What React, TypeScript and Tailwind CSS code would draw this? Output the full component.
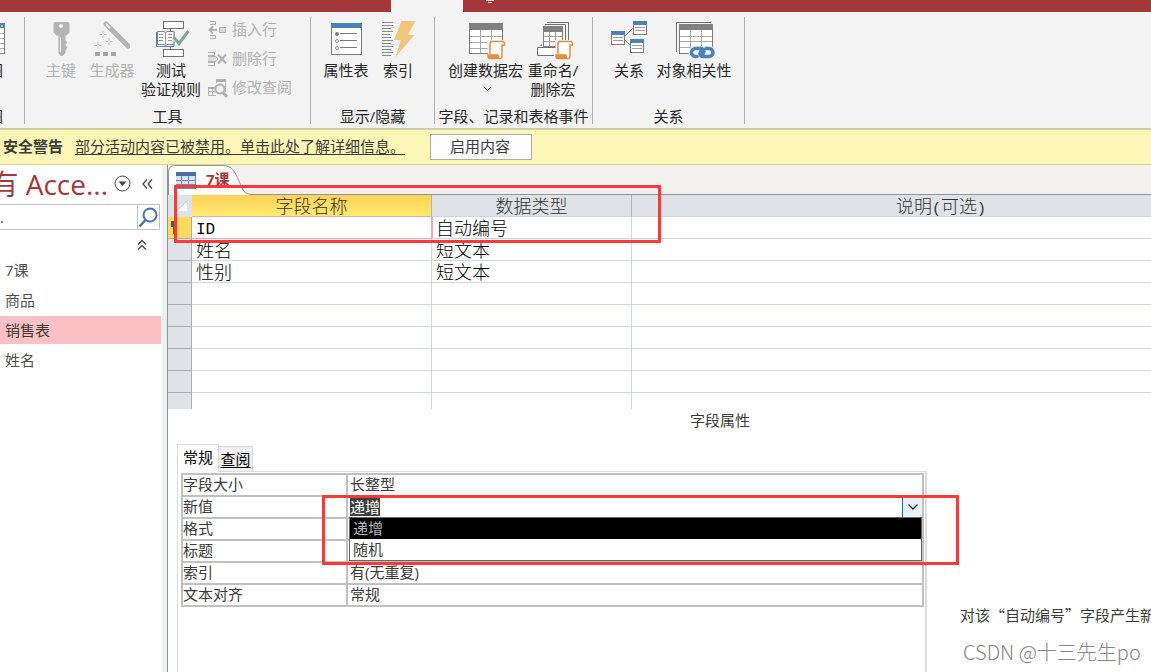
import React from "react";

const UI = "font-['Open_Sans','Noto_Sans_CJK_SC',sans-serif]";

function DatasheetIcon() {
  return (
    <svg className="-mr-0.5 h-10 w-8 shrink-0" viewBox="0 0 32 40" fill="none">
      <rect x="1.500" y="3.500" width="30" height="30" fill="#fff" stroke="#7a7a7a" />
      <rect x="2" y="4" width="29" height="4" fill="#4b82ba" />
      <path d="M28 6h2" stroke="#fff" />
      <path d="M2 13.500h29M2 18.500h29M2 23.500h29M2 28.500h29M12.500 8v25M22.500 8v25" stroke="#a9a9a9" />
    </svg>
  );
}

function KeyIcon() {
  return (
    <svg className="h-10 w-8" viewBox="0 0 32 40">
      <path
        fill="#b5b3b5"
        fillRule="evenodd"
        d="M9.500 2h13a2 2 0 0 1 2 2v8.500l-3 3h-1v5l2 2-2 2v1l2 2-2 3v2.500l-3 3h-2l-2-3V15.500h-2l-3-3V4a2 2 0 0 1 2-2Zm6.500 2a2 2 0 1 0 0 4 2 2 0 0 0 0-4Zm-1 13v15h1V17Z"
      />
    </svg>
  );
}

function BuilderIcon() {
  return (
    <svg className="h-10 w-9" viewBox="0 0 36 40" fill="none">
      <path d="M12 4 34 26" stroke="#b5b3b5" strokeWidth="5" strokeLinecap="round" />
      <path d="m12 4 4 4" stroke="#f3f3f3" strokeWidth="2" />
      <path d="M9 11v2.500M9 15.500V18M5.500 14.500H8M10 14.500h2.500M15 18v2.500M15 22.500V25M11.500 21.500H14M16 21.500h2.500M4 22v2.500M4 26.500V29M.5 25.500H3M5 25.500h2.500" stroke="#b9b7b9" />
      <path d="M1 34h5M9 34h5M17 34h5" stroke="#a5a3a5" strokeWidth="4" />
    </svg>
  );
}

function ValidationIcon() {
  return (
    <svg className="ml-1 h-10 w-9" viewBox="0 0 36 40" fill="none">
      <path d="M15.500 8v22" stroke="#707070" />
      <rect x="8.500" y="1.500" width="20" height="7" fill="#fff" stroke="#707070" />
      <rect x="8.500" y="29.500" width="20" height="7" fill="#fff" stroke="#707070" />
      <path d="M1.500 12v14.500h17.500V12" fill="#fff" stroke="#4b82ba" />
      <path d="M2.500 11.500H9l1.500 1 1.500-1h7v13h-7l-1.500 1-1.500-1H2.500Z" fill="#fff" stroke="#808080" />
      <path d="M10.500 12v13M4 14.500h4M4 17.500h4M4 20.500h4M13 14.500h4M13 17.500h4M13 20.500h4" stroke="#969696" />
      <path d="m19 17 5.500 6.500L34 11" stroke="#f3f3f3" strokeWidth="5" />
      <path d="m18.500 17 5.500 6.500L33.500 11" stroke="#75aa97" strokeWidth="3" />
    </svg>
  );
}

function InsertRowIcon() {
  return (
    <svg className="h-[20px] w-[20px]" viewBox="0 0 20 20" fill="none" stroke="#b1afb1">
      <path d="M2 1.500h5.500v3H2M2 18.500h5.500v-3H2" />
      <rect x="11.500" y="7.500" width="6" height="5" fill="#dedbe0" />
      <path d="M9 10H2M5 6.500 1.500 10 5 13.500" strokeWidth="2" />
    </svg>
  );
}

function DeleteRowIcon() {
  return (
    <svg className="h-[20px] w-[20px]" viewBox="0 0 20 20" fill="none" stroke="#b1afb1">
      <path d="M0 3.500h6.500v3H0M0 16.500h6.500v-3H0" />
      <path d="M0 7.500h8l2 2.500-2 2.500H0" fill="#dedbe0" />
      <path d="m10 5.500 8 9M18 5.500l-8 9" strokeWidth="2" />
    </svg>
  );
}

function ModifyLookupIcon() {
  return (
    <svg className="h-[20px] w-[20px]" viewBox="0 0 20 20" fill="none" stroke="#b1afb1">
      <path d="M8.500 5V1.500h9V14" />
      <path d="M8 2.500h10" strokeWidth="3" />
      <path d="M7 9.500H.500v8H8M1 13.500h6M4.500 10v8" />
      <path d="M0 10h7" strokeWidth="2" />
      <circle cx="12" cy="11" r="4.500" fill="#f3f3f3" strokeWidth="2" />
      <path d="m15 14.500 4 4.500" strokeWidth="3" />
    </svg>
  );
}

function PropertySheetIcon() {
  return (
    <svg className="h-10 w-8" viewBox="0 0 32 40" fill="none">
      <rect x="1.500" y="3.500" width="30" height="31" fill="#fff" stroke="#7a7a7a" />
      <rect x="1" y="3" width="31" height="5" fill="#4b82ba" />
      <circle cx="7" cy="14" r="2" fill="#7a7a7a" />
      <circle cx="7" cy="21" r="1.500" stroke="#8a8a8a" />
      <circle cx="7" cy="28" r="1.500" stroke="#8a8a8a" />
      <path d="M10 13.500h17M10 20.500h17M10 27.500h17" stroke="#7a7a7a" />
    </svg>
  );
}

function IndexIcon() {
  return (
    <svg className="h-10 w-9" viewBox="0 0 36 40" fill="none">
      <path
        d="M2 2.500h11M2 5.500h11M2 8.500h9M2 11.500h11M2 14.500h8M2 17.500h9M2 20.500h11M2 23.500h9M2 26.500h11M2 29.500h9M2 32.500h11M2 35.500h9"
        stroke="#8c8c8c"
      />
      <path d="M21.500 1h14L28 15h6.500L15.500 37l5.500-17h-7Z" fill="#efc77c" />
    </svg>
  );
}

function Scroll({ x, y }: { x: number; y: number }) {
  return (
    <g transform={`translate(${x} ${y})`}>
      <path d="M-1-1h18v6h-2v14H-2v-6h2Z" fill="#f3f3f3" />
      <path d="M2 13V2l1-1.500h12l1.500 1.500v2H14v12l-1 1.500H1L0 16v-2h10" fill="#fff" stroke="#e88c3e" strokeWidth="1.500" />
      <path d="M0 14h11v4H1l-1-1Z" fill="#e88c3e" />
    </g>
  );
}

function DataMacroIcon() {
  return (
    <svg className="ml-1 h-10 w-[38px]" viewBox="0 0 38 40" fill="none">
      <rect x=".5" y="3.500" width="33" height="30" fill="#fff" stroke="#7a7a7a" />
      <rect x="0" y="3" width="34" height="7" fill="#808080" />
      <path d="M1 16.500h32M1 22.500h32M1 28.500h32M11.500 10v23M22.500 10v23" stroke="#a9a9a9" />
      <Scroll x={19} y={21} />
    </svg>
  );
}

function RenameMacroIcon() {
  return (
    <svg className="ml-1 h-10 w-[38px]" viewBox="0 0 38 40" fill="none">
      <path d="M11 2.500h21.500V26M9 4.500h20.500V28" stroke="#707070" />
      <rect x="7.500" y="6.500" width="19" height="20" fill="#fff" stroke="#808080" />
      <rect x="7" y="6" width="20" height="6" fill="#808080" />
      <path d="M8 16.500h18M8 21.500h18M13.500 12v14M19.500 12v14" stroke="#a0a0a0" />
      <path d="M1.500 27.500h20v8h-20z" fill="#fff" stroke="#707070" />
      <path d="m4 26 2-2.500V26Z" fill="#808080" />
      <Scroll x={20} y={21} />
    </svg>
  );
}

function MiniTable({ x, y }: { x: number; y: number }) {
  return (
    <g transform={`translate(${x} ${y})`}>
      <rect x=".5" y=".5" width="13" height="13" fill="#fff" stroke="#7a7a7a" />
      <rect width="14" height="4" fill="#4b82ba" />
      <path d="M2 6.500h10M2 9.500h10" stroke="#a0a0a0" />
    </g>
  );
}

function RelationshipsIcon() {
  return (
    <svg className="h-10 w-[38px]" viewBox="0 0 38 40" fill="none">
      <path d="m14 17 9-9M14 19l6 6" stroke="#8a8a8a" />
      <MiniTable x={1} y={11} />
      <MiniTable x={23} y={1} />
      <MiniTable x={20} y={19} />
    </svg>
  );
}

function DependenciesIcon() {
  return (
    <svg className="ml-1 h-10 w-[40px]" viewBox="0 0 40 40" fill="none">
      <path d="M.5 32V2.500H35" stroke="#707070" />
      <rect x="3.500" y="4.500" width="33" height="29" fill="#fff" stroke="#7a7a7a" />
      <rect x="3" y="4" width="34" height="6" fill="#808080" />
      <path d="M4 16.500h32M4 21.500h32M4 27.500h32M14.500 10v23M25.500 10v23" stroke="#a9a9a9" />
      <path d="M16 26h20l4 8-4 4H14l-2-6Z" fill="#f3f3f3" />
      <g stroke="#4b82ba" strokeWidth="3.500" strokeLinecap="round">
        <path d="M21 36.500h-1.500a4 4 0 0 1 0-8H24c4 0 5 3 3 5.500" />
        <path d="M30 28.500h3a4 4 0 0 1 0 8H28c-4 0-5-3-3-5.500" />
      </g>
    </svg>
  );
}

function Caret({ className }: { className: string }) {
  return (
    <svg className={className} viewBox="0 0 12 8" fill="none" stroke="currentColor">
      <path d="m1.500 1.500 4.500 4.500 4.500-4.500" strokeWidth="1.300" />
    </svg>
  );
}

function BigButton({
  icon,
  lines,
  width,
  disabled,
  menu,
}: {
  icon: React.ReactNode;
  lines: string[];
  width: string;
  disabled?: boolean;
  menu?: boolean;
}) {
  return (
    <button
      type="button"
      disabled={disabled}
      className={`flex shrink-0 flex-col items-center pt-2 leading-[19px] whitespace-nowrap disabled:text-[#b1b1b1] ${width}`}
    >
      <span className="pb-px">{icon}</span>
      {lines.map((line) => (
        <span key={line}>{line}</span>
      ))}
      {menu && <Caret className="mt-1.5 ml-1 h-[6px] w-[9px]" />}
    </button>
  );
}

function SmallButton({ icon, label }: { icon: React.ReactNode; label: string }) {
  return (
    <button type="button" disabled className="flex h-[29px] items-center gap-1 text-[#b1b1b1]">
      {icon}
      {label}
    </button>
  );
}

function Group({ label, children, className }: { label: string; children: React.ReactNode; className: string }) {
  return (
    <section className={`flex shrink-0 ${className}`}>
      <div className="flex min-w-0 flex-1 flex-col">
        <div className="flex h-[95px]">{children}</div>
        <h2 className="text-center leading-[18px] whitespace-nowrap">{label}</h2>
      </div>
      <div className="mt-[5px] mb-1 w-px bg-[#b0b0b0]" />
    </section>
  );
}

function Ribbon() {
  return (
    <div className="flex h-[117px] shrink-0 overflow-hidden border-b border-[#c9c7c5] bg-[#f3f3f3] text-[15px] text-[#262626]">
      <section className="flex w-[25px] shrink-0 overflow-hidden">
        <div className="flex min-w-0 flex-1 flex-col items-end pr-[21px]">
          <button type="button" className="flex h-[95px] shrink-0 flex-col items-end pt-2 leading-[19px] whitespace-nowrap">
            <DatasheetIcon />
            <span className="pt-px">视图</span>
          </button>
          <h2 className="leading-[18px] whitespace-nowrap">视图</h2>
        </div>
        <div className="mt-[5px] mb-1 w-px bg-[#b0b0b0]" />
      </section>
      <Group label="工具" className="w-[286px]">
        <div className="flex pl-[14px]">
          <BigButton icon={<KeyIcon />} lines={["主键"]} width="w-11" disabled />
          <BigButton icon={<BuilderIcon />} lines={["生成器"]} width="w-[58px]" disabled />
          <BigButton icon={<ValidationIcon />} lines={["测试", "验证规则"]} width="w-[60px]" />
          <div className="flex flex-col pt-[3px] pl-[7px]">
            <SmallButton icon={<InsertRowIcon />} label="插入行" />
            <SmallButton icon={<DeleteRowIcon />} label="删除行" />
            <SmallButton icon={<ModifyLookupIcon />} label="修改查阅" />
          </div>
        </div>
      </Group>
      <Group label="显示/隐藏" className="w-[124px]">
        <div className="flex pl-[5px]">
          <BigButton icon={<PropertySheetIcon />} lines={["属性表"]} width="w-[60px]" />
          <BigButton icon={<IndexIcon />} lines={["索引"]} width="w-11" />
        </div>
      </Group>
      <Group label="字段、记录和表格事件" className="w-[158px]">
        <div className="flex pl-3">
          <BigButton icon={<DataMacroIcon />} lines={["创建数据宏"]} width="w-[77px]" menu />
          <BigButton icon={<RenameMacroIcon />} lines={["重命名/", "删除宏"]} width="w-[58px]" />
        </div>
      </Group>
      <Group label="关系" className="w-[152px]">
        <div className="flex pl-[14px]">
          <BigButton icon={<RelationshipsIcon />} lines={["关系"]} width="w-11" />
          <BigButton icon={<DependenciesIcon />} lines={["对象相关性"]} width="w-[86px]" />
        </div>
      </Group>
    </div>
  );
}

function MessageBar() {
  return (
    <div className="flex h-9 shrink-0 items-center border-y border-[#d8d68a] bg-[#fcf7b6] pl-[3px] text-[15px] text-[#3b3b3b]">
      <strong className="pb-0.5 font-bold">安全警告</strong>
      <a href="#details" className="ml-3 pb-0.5 underline underline-offset-2">
        部分活动内容已被禁用。单击此处了解详细信息。
      </a>
      <button type="button" className="ml-[25px] h-[26px] w-[102px] border border-[#ababab] bg-[#fdfdfd] pr-0.5 pb-0.5">
        启用内容
      </button>
    </div>
  );
}

function NavigationPane() {
  const items = ["7课", "商品", "销售表", "姓名"];
  return (
    <nav className="flex w-[161px] shrink-0 flex-col bg-white">
      <header className="flex h-[39px] items-center justify-end gap-1.5 overflow-hidden pr-2 pb-0.5">
        <h1 className="text-[28px] leading-[36px] whitespace-nowrap text-[#a4373a]">有 Acce...</h1>
        <button type="button" aria-label="选择类别" className="shrink-0">
          <svg className="h-[17px] w-[17px]" viewBox="0 0 17 17" fill="none" stroke="#444">
            <circle cx="8.500" cy="8.500" r="7.500" />
            <path d="M4.500 6.500h8L8.500 11Z" fill="#444" stroke="none" />
          </svg>
        </button>
        <button type="button" aria-label="折叠" className="ml-1 shrink-0">
          <svg className="h-[12px] w-[12px]" viewBox="0 0 12 12" fill="none" stroke="#444" strokeWidth="1.300">
            <path d="M6 1.500 2 6l4 4.500M11 1.500 7 6l4 4.500" />
          </svg>
        </button>
      </header>
      <form className="mr-px flex h-[26px] border-y border-r border-[#c3c3c3]">
        <input aria-label="搜索" defaultValue="." className="min-w-0 flex-1 text-[15px] text-[#444] outline-none" />
        <button type="button" aria-label="执行搜索" className="w-[22px] border-l border-[#c3c3c3]">
          <svg className="h-[22px] w-[20px]" viewBox="0 0 20 22" fill="none" stroke="#4178b4">
            <circle cx="12" cy="9" r="6.500" strokeWidth="2" />
            <path d="m7.500 14-6 6.500" strokeWidth="2.500" />
          </svg>
        </button>
      </form>
      <button type="button" aria-label="全部折叠" className="mt-2 mr-3 self-end">
        <svg className="h-[14px] w-[14px]" viewBox="0 0 14 14" fill="none" stroke="#444" strokeWidth="1.300">
          <path d="m3 6.500 4-4 4 4M3 11.500l4-4 4 4" />
        </svg>
      </button>
      <ul className="mt-1 flex flex-col gap-0.5 text-[15px] text-[#505050]">
        {items.map((item) => (
          <li key={item}>
            <a
              href="#object"
              className={`block pl-[5px] leading-7 ${item === "销售表" ? "bg-[#fcc1c4] text-[#3b3b3b]" : ""}`}
            >
              {item}
            </a>
          </li>
        ))}
      </ul>
    </nav>
  );
}

function DocumentTabs() {
  return (
    <div className="h-[30px] bg-[#f3f1f0]">
      <div className="relative flex h-full items-start border-b border-[#8f949a]">
        <svg className="absolute top-0 left-0 h-[30px] w-[90px]" viewBox="0 0 90 30" fill="none">
          <path d="M.5 30V7Q.5 .5 7 .5H55C64 .5 67 7 71 16c4 10 6 13.500 13 13.500L84 30Z" fill="#fff" />
          <path d="M.5 30V7Q.5 .5 7 .5H55C64 .5 67 7 71 16c4 10 6 13.500 13 13.500h6" stroke="#8f949a" />
        </svg>
        <svg className="relative mt-[7px] ml-2 h-[17px] w-[20px]" viewBox="0 0 20 17">
          <rect width="20" height="17" fill="#d7e3f4" />
          <rect width="20" height="4" fill="#4a6ea9" />
          <path d="M0 8.500h20M0 12.500h20M0 16.500h20M5.500 4v13M12.500 4v13M19.500 4v13" stroke="#7089b0" fill="none" />
        </svg>
        <button type="button" className="relative ml-2.5 text-[15px] leading-[29px] font-bold text-[#a4373a]">
          7课
        </button>
      </div>
    </div>
  );
}

const FIELDS = [
  ["ID", "自动编号"],
  ["姓名", "短文本"],
  ["性别", "短文本"],
  ["", ""],
  ["", ""],
  ["", ""],
  ["", ""],
  ["", ""],
];

function FieldGrid() {
  return (
    <div className="relative">
      <table className="w-full table-fixed border-separate border-spacing-0 font-['Liberation_Mono','Noto_Sans_CJK_SC',monospace] text-[18px] leading-[15px] font-light text-black">
        <colgroup>
          <col className="w-[24px]" />
          <col className="w-[240px]" />
          <col className="w-[200px]" />
          <col />
        </colgroup>
        <thead>
          <tr className="h-[22px] bg-[#dfe2e7] text-[#333]">
            <th className="border-b border-[#dfe2e7] p-0">
              <svg className="mr-1 ml-auto h-[12px] w-[12px]" viewBox="0 0 12 12">
                <path d="M12 0v12H0Z" fill="#f5f8fc" stroke="#c4cede" />
              </svg>
            </th>
            <th className="border-r border-b border-r-[#aeb3bb] border-b-[#f4a3a7] bg-linear-to-b from-[#ffd158] to-[#ffe970] p-0 pt-[6px] font-light">
              字段名称
            </th>
            <th className="border-r border-b border-r-[#aeb3bb] border-b-[#ced4e2] p-0 pt-[6px] font-light">数据类型</th>
            <th className="border-b border-[#ced4e2] p-0 pt-[6px] pl-[99px] font-light">
              说明<span className="text-[15px] leading-[8px]">(</span>可选
              <span className="text-[15px] leading-[8px]">)</span>
            </th>
          </tr>
        </thead>
        <tbody>
          {FIELDS.map(([name, type], i) => (
            <tr key={i} className="h-[22px]">
              <th className={`border-r border-b border-[#a9adb4] p-0 ${i === 0 ? "bg-[#ffda61]" : "bg-[#dfe2e7]"}`}>
                {i === 0 && (
                  <svg className="ml-[3px] h-[14px] w-[8px]" viewBox="0 0 8 14">
                    <path d="M0 0h6v8H4v5H2V6H0Z" fill="#555" />
                  </svg>
                )}
              </th>
              <td
                className={`border-r border-b p-0 pt-[6px] pl-1 ${i === 0 ? "border-[#f4a3a7] text-[16px] shadow-[1px_0_0_#f4a3a7]" : "border-[#ced4e2]"}`}
              >
                {name}
              </td>
              <td className="border-r border-b border-[#ced4e2] p-0 pt-[6px] pl-1">{type}</td>
              <td className="border-b border-[#ced4e2] p-0" />
            </tr>
          ))}
          <tr className="h-[16px]">
            <th className="border-r border-[#a9adb4] bg-[#dfe2e7] p-0" />
            <td className="border-r border-[#ced4e2] p-0" />
            <td className="border-r border-[#ced4e2] p-0" />
            <td className="p-0" />
          </tr>
        </tbody>
      </table>
      <div className="pointer-events-none absolute -top-[10px] left-[6px] h-[58px] w-[487px] border-3 border-[#fd3838]" />
    </div>
  );
}

const PROPERTIES = [
  ["字段大小", "长整型"],
  ["新值", "递增"],
  ["格式", ""],
  ["标题", ""],
  ["索引", "有(无重复)"],
  ["文本对齐", "常规"],
];

function NewValuePicker() {
  return (
    <div className="relative flex h-5 items-center">
      <select
        id="new-value"
        defaultValue="递增"
        className="h-[18px] appearance-none bg-[#404040] p-0 leading-[18px] text-white outline-none [field-sizing:content]"
      >
        <option>递增</option>
      </select>
      <button
        type="button"
        aria-label="打开列表"
        className="ml-auto flex h-full w-5 items-center justify-center border-l border-[#0078d7] bg-[#e5f1fb] text-[#222]"
      >
        <Caret className="h-[8px] w-[12px]" />
      </button>
      <ul
        role="listbox"
        aria-label="新值"
        className="absolute top-5 right-0 -left-px z-10 border border-[#666] bg-white leading-[21px]"
      >
        <li role="option" aria-selected="true" className="bg-black pl-[3px] text-[#b9b9b9]">
          递增
        </li>
        <li role="option" aria-selected="false" className="pl-[3px]">
          随机
        </li>
      </ul>
      <div className="pointer-events-none absolute -top-0.5 -right-[37px] -left-[28px] z-20 h-[70px] border-3 border-[#fd3838]" />
    </div>
  );
}

function FieldProperties() {
  return (
    <section className="flex flex-1 pl-[9px] text-[15px]">
      <div className="flex w-[750px] shrink-0 flex-col">
        <div role="tablist" className="flex h-[27px] items-end text-black">
          <button
            type="button"
            role="tab"
            aria-selected="true"
            className="z-10 -mb-px h-[28px] w-[42px] border border-b-0 border-[#dcdcdc] bg-white pb-0.5"
          >
            常规
          </button>
          <button
            type="button"
            role="tab"
            aria-selected="false"
            className="h-[25px] w-[34px] border border-b-0 border-l-0 border-[#dcdcdc] bg-[#f0f0f0] underline underline-offset-2"
          >
            查阅
          </button>
        </div>
        <div className="flex-1 border-t border-r-2 border-l border-[#dcdcdc] pt-px pr-px pl-[3px]">
          <table className="w-full table-fixed border-collapse leading-5 text-[#3b3b3b]">
            <colgroup>
              <col className="w-[165px]" />
              <col />
            </colgroup>
            <tbody>
              {PROPERTIES.map(([label, value]) => (
                <tr key={label} className="h-[22px]">
                  <th className="border-2 border-[#c0c0c0] p-0 pb-0.5 text-left leading-[18px] font-normal">
                    {label === "新值" ? <label htmlFor="new-value">{label}</label> : label}
                  </th>
                  <td className={`border-2 border-[#c0c0c0] p-0 pl-0.5 ${label === "新值" ? "" : "pb-0.5 leading-[18px]"}`}>
                    {label === "新值" ? <NewValuePicker /> : value}
                  </td>
                </tr>
              ))}
            </tbody>
          </table>
        </div>
      </div>
      <aside className="min-w-0 flex-1 overflow-hidden pt-[161px] pl-[33px] font-['Noto_Sans_CJK_SC',sans-serif] whitespace-nowrap">
        <p className="leading-5 text-[#3b3b3b]">对该“自动编号”字段产生新</p>
        <p className="mt-[13px] pl-[3px] text-[20px] leading-[28px] font-light text-[#858585]">
          CSDN @十三先生po
        </p>
      </aside>
    </section>
  );
}

export default function App() {
  return (
    <div lang="zh-CN" className={`flex h-screen flex-col overflow-hidden bg-white ${UI}`}>
      <div className="flex h-3 shrink-0 bg-[#a4373a]">
        <div className="w-[391px]" />
        <div className="w-[72px] bg-[#f3f3f3]" />
        <svg className="ml-[23px] h-1 w-2" viewBox="0 0 8 4">
          <path d="M0 0h8v1H0zM2 2h4v1H2z" fill="#f3dede" />
        </svg>
      </div>
      <Ribbon />
      <MessageBar />
      <div className="flex min-h-0 flex-1">
        <NavigationPane />
        <div className="w-[7px] shrink-0 border-r border-l border-r-[#8f949a] border-l-white bg-[#eeeff1]" />
        <main className="flex min-w-0 flex-1 flex-col">
          <DocumentTabs />
          <FieldGrid />
          <h2 className="h-[35px] pl-[522px] text-[15px] leading-[22px] text-[#3b3b3b]">字段属性</h2>
          <FieldProperties />
        </main>
      </div>
    </div>
  );
}
